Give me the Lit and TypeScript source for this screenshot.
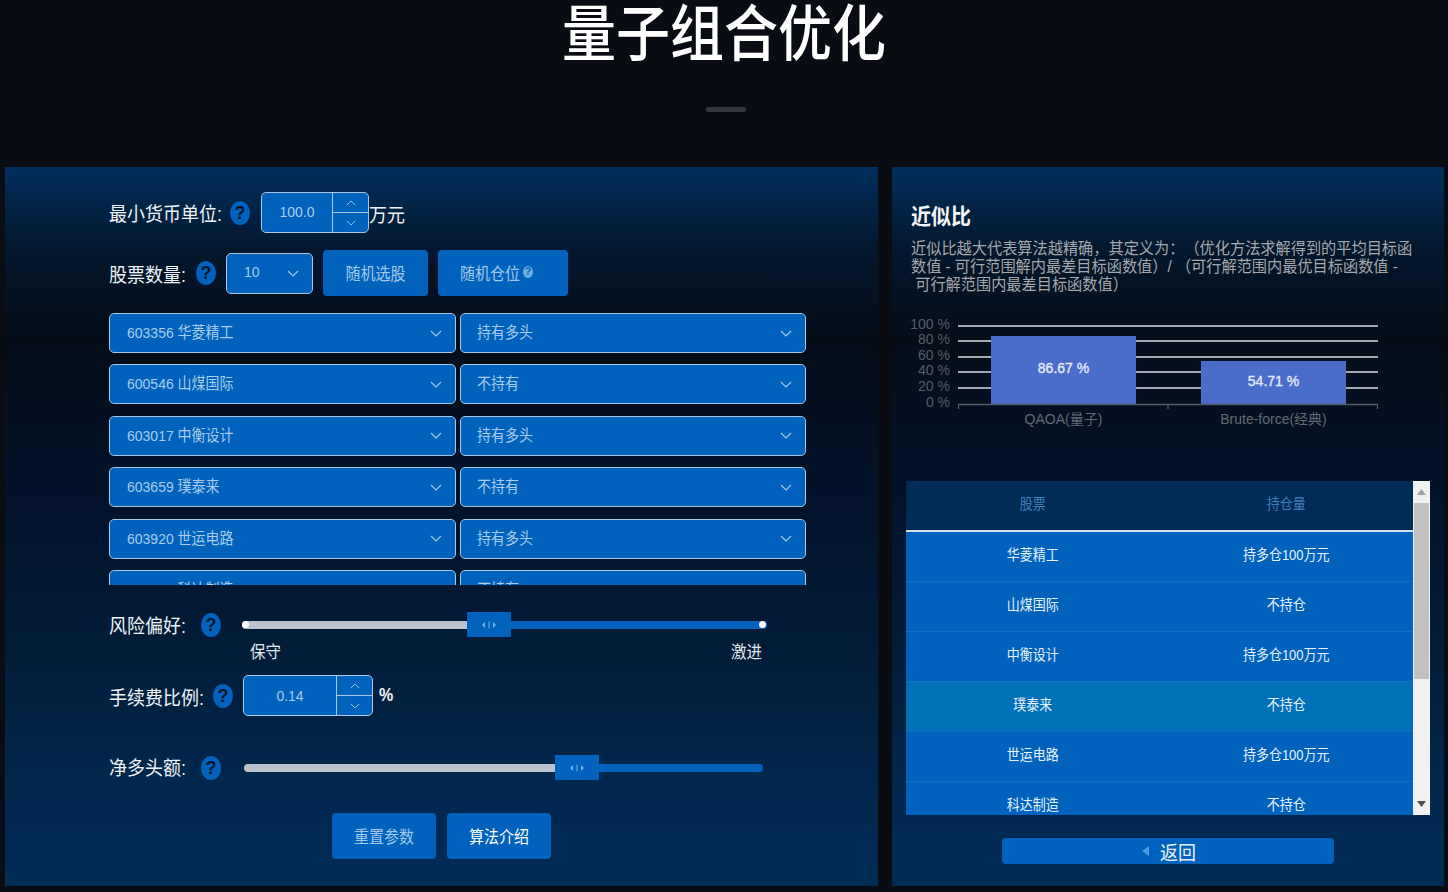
import { LitElement, html, css, svg } from 'lit';
import { customElement, state } from 'lit/decorators.js';
import { classMap } from 'lit/directives/class-map.js';

const chevronDown = html`<svg class="chev" viewBox="0 0 12 7"><polyline points="1,1 6,6 11,1"></polyline></svg>`;
const chevronUp = html`<svg class="chev small" viewBox="0 0 12 7"><polyline points="1,6 6,1 11,6"></polyline></svg>`;
const chevronDownSmall = html`<svg class="chev small" viewBox="0 0 12 7"><polyline points="1,1 6,6 11,1"></polyline></svg>`;

const handle = html`<span class="handle">
  <svg viewBox="0 0 20 8" width="20" height="8">
    <polygon points="3,4 6,1 6,7" fill="#6fb3ea"></polygon>
    <rect x="9.5" y="0.5" width="1" height="7" fill="#6fb3ea"></rect>
    <polygon points="17,4 14,1 14,7" fill="#6fb3ea"></polygon>
  </svg>
</span>`;

const help = html`<span class="help">?</span>`;

@customElement('app-root')
export class AppRoot extends LitElement {
  @state() stocks = [
    ['603356 华菱精工', '持有多头', '华菱精工', '持多仓100万元'],
    ['600546 山煤国际', '不持有', '山煤国际', '不持仓'],
    ['603017 中衡设计', '持有多头', '中衡设计', '持多仓100万元'],
    ['603659 璞泰来', '不持有', '璞泰来', '不持仓'],
    ['603920 世运电路', '持有多头', '世运电路', '持多仓100万元'],
    ['600499 科达制造', '不持有', '科达制造', '不持仓'],
  ];

  static styles = css`
    :host {
      display: block;
      height: 892px;
      overflow: hidden;
      background: #090d13;
      color: #eef3f8;
      font-family: "Liberation Sans", "Noto Sans CJK SC", sans-serif;
      text-spacing-trim: space-all;
    }

    /* the reference text is a little taller than it is wide */
    .tall {
      display: inline-block;
      transform: scaleY(1.1);
    }

    .header {
      height: 167px;
      display: flex;
      flex-direction: column;
      align-items: center;
    }

    .title {
      font-size: 54px;
      line-height: 66px;
      font-weight: 500;
      color: #fff;
      margin: 0;
      transform: translateY(1.7px) scaleY(1.13);
    }

    .divider {
      width: 40px;
      height: 5px;
      margin: 41px 0 0 3px;
      border-radius: 2px;
      background: #33373d;
    }

    .main {
      display: flex;
      gap: 14px;
      padding-left: 5px;
    }

    .panel {
      height: 719px;
      box-sizing: border-box;
      background: linear-gradient(180deg, #012f5c 0%, #03162c 12%, #050d19 24%, #03122a 45%, #021b36 65%, #01274c 85%, #012c56 100%);
    }

    .left {
      width: 873px;
      padding: 25px 0 0 104px;
    }

    .right {
      width: 552px;
      padding-top: 35px;
    }

    .row {
      display: flex;
      align-items: center;
      font-size: 18px;
    }

    .label {
      font-size: 18px;
      white-space: nowrap;
      color: #eef3f8;
    }

    .label.up {
      margin-bottom: 2px;
    }

    .label.up-more {
      margin-bottom: 4px;
    }

    .help {
      flex: none;
      width: 20px;
      height: 24px;
      margin-left: 9px;
      border-radius: 50%;
      background: #0062bd;
      color: #04162c;
      font-size: 18px;
      font-weight: 700;
      line-height: 24px;
      text-align: center;
    }

    .help.near {
      margin-left: 8px;
    }

    .help.wide {
      margin-left: 10px;
    }

    .help.far {
      margin-left: 15px;
    }

    .chev {
      flex: none;
      width: 12px;
      height: 7px;
      fill: none;
      stroke: #a9cdea;
      stroke-width: 1.1;
    }

    .chev.small {
      width: 10px;
      height: 6px;
    }

    .stepper {
      display: flex;
      box-sizing: border-box;
      height: 41px;
      border: 1.5px solid #a8c7e0;
      border-radius: 5px;
      background: #0062bd;
      color: #a9cdea;
      font-size: 14px;
    }

    .stepper .value {
      flex: 1;
      display: flex;
      align-items: center;
      justify-content: center;
      padding-bottom: 2px;
    }

    .stepper .steps {
      width: 35px;
      display: flex;
      flex-direction: column;
      border-left: 1.5px solid #a8c7e0;
    }

    .stepper .steps span {
      flex: 1;
      display: flex;
      align-items: center;
      justify-content: center;
    }

    .stepper .steps span + span {
      border-top: 1.5px solid #a8c7e0;
    }

    .unit-input {
      width: 108px;
      margin-left: 11px;
    }

    .fee-input {
      width: 130px;
      margin-left: 10px;
    }

    .percent {
      margin-left: 6px;
      font-size: 16px;
      font-weight: 700;
    }

    .select {
      display: flex;
      align-items: center;
      justify-content: space-between;
      box-sizing: border-box;
      height: 40px;
      padding: 0 13px 0 17px;
      border: 1.5px solid #a8c7e0;
      border-radius: 5px;
      background: #0062bd;
      color: #a9cdea;
      font-size: 14px;
      white-space: nowrap;
    }

    .select.side {
      padding-left: 16px;
    }

    .select span {
      margin-bottom: 4px;
    }

    .count-select {
      width: 87px;
      height: 41px;
      margin-left: 10px;
    }

    .btn {
      display: flex;
      align-items: center;
      justify-content: center;
      height: 46px;
      padding-bottom: 2px;
      box-sizing: border-box;
      border-radius: 4px;
      background: #0062bd;
      color: #a3c9ea;
      font-size: 15px;
      white-space: nowrap;
    }

    .btn.white {
      color: #fff;
    }

    .row-count {
      height: 46px;
      margin-top: 17px;
    }

    .btn-pick {
      width: 105px;
      margin-left: 10px;
    }

    .btn-wide {
      width: 130px;
      margin-left: 10px;
      padding-left: 22px;
      justify-content: flex-start;
    }

    .mini-help {
      width: 10px;
      height: 12px;
      margin-left: 3px;
      border-radius: 50%;
      background: #6cb0e0;
      color: #0062bd;
      font-size: 10px;
      font-weight: 700;
      line-height: 12px;
      text-align: center;
    }

    .stock-list {
      width: 697px;
      height: 272px;
      margin-top: 17px;
      overflow: hidden;
      display: grid;
      grid-template-columns: 347px 346px;
      grid-auto-rows: 40px;
      column-gap: 4px;
      row-gap: 11.4px;
    }

    .slider {
      display: flex;
      align-items: center;
      height: 25px;
    }

    .slider .done,
    .slider .rest {
      height: 8px;
    }

    .slider .done {
      background: #bcc2cb;
      border-radius: 4px 0 0 4px;
    }

    .slider .rest {
      background: #0062bd;
      border-radius: 0 4px 4px 0;
    }

    .slider .done.dot,
    .slider .rest.dot {
      position: relative;
    }

    .slider .done.dot::before,
    .slider .rest.dot::after {
      content: '';
      position: absolute;
      top: 0.5px;
      width: 7px;
      height: 7px;
      border-radius: 50%;
      background: #fff;
    }

    .slider .done.dot::before {
      left: 0;
    }

    .slider .rest.dot::after {
      right: 1px;
    }

    .handle {
      flex: none;
      width: 44px;
      height: 25px;
      background: #0062bd;
      display: flex;
      align-items: center;
      justify-content: center;
    }

    .row-risk {
      height: 25px;
      margin-top: 27px;
    }

    .risk-slider {
      margin-left: 21px;
    }

    .ends {
      display: flex;
      justify-content: space-between;
      box-sizing: border-box;
      width: 653px;
      height: 20px;
      margin-top: 5px;
      padding-left: 141px;
      font-size: 15.5px;
      line-height: 20px;
      color: #e2e8ef;
    }

    .row-fee {
      height: 41px;
      margin-top: 13px;
    }

    .row-net {
      height: 25px;
      margin-top: 39px;
    }

    .net-slider {
      margin-left: 22.5px;
    }

    .actions {
      display: flex;
      gap: 11px;
      margin-top: 33px;
      padding-left: 223px;
    }

    .actions .btn {
      width: 104px;
    }

    .chart-title {
      margin: 0 0 0 19px;
      font-size: 20px;
      line-height: 28px;
      font-weight: 700;
      color: #f4f6f8;
      transform: scaleY(1.1);
    }

    .desc {
      margin: 12px 0 0 19px;
      font-size: 15.2px;
      line-height: 16.7px;
      color: #a4a7ab;
      white-space: nowrap;
      transform: scaleY(1.08);
    }

    .chart {
      display: block;
      margin-top: 24px;
      width: 552px;
      height: 120px;
    }

    .chart text {
      font-family: "Liberation Sans", "Noto Sans CJK SC", sans-serif;
      font-size: 14px;
    }

    .table-wrap {
      display: flex;
      width: 524px;
      height: 334px;
      margin: 45px 0 0 14px;
    }

    .table {
      flex: 1;
      overflow: hidden;
      font-size: 13px;
    }

    .tr {
      display: grid;
      grid-template-columns: 1fr 1fr;
      align-items: center;
      justify-items: center;
      box-sizing: border-box;
      height: 50px;
      padding-bottom: 6px;
      background: #0062bd;
      border-bottom: 1px solid #0a72c6;
      color: #e6f3ff;
    }

    .tr.alt {
      background: #0070b8;
    }

    .tr.head {
      height: 51px;
      background: #012c56;
      border-bottom: 2px solid #d3dfeb;
      color: #3f80b8;
    }

    .scrollbar {
      flex: none;
      width: 17px;
      display: flex;
      flex-direction: column;
      align-items: center;
      background: #f1f1f1;
    }

    .scrollbar .arrow {
      height: 22px;
      display: flex;
      align-items: center;
      justify-content: center;
      flex: none;
    }

    .scrollbar .thumb {
      width: 15px;
      height: 176px;
      background: #c1c1c1;
    }

    .scrollbar .track {
      flex: 1;
    }

    .back {
      display: flex;
      align-items: center;
      justify-content: center;
      gap: 11px;
      width: 332px;
      height: 26px;
      margin: 23px 0 0 110px;
      padding-left: 2px;
      box-sizing: border-box;
      border-radius: 4px;
      background: #0062bd;
      color: #eaf0f6;
      font-size: 18px;
    }
  `;

  renderChart() {
    const ticks = [
      ['100 %', 326],
      ['80 %', 341],
      ['60 %', 357],
      ['40 %', 372],
      ['20 %', 388],
      ['0 %', 404],
    ] as const;
    const bars = [
      { x: 991, top: 336, value: '86.67 %', name: 'QAOA(量子)' },
      { x: 1201, top: 361, value: '54.71 %', name: 'Brute-force(经典)' },
    ];
    return html`<svg class="chart" viewBox="892 316 552 120">
      ${ticks.map(
        ([name, y]) => svg`
          <text x="950" y=${y + 3} text-anchor="end" fill="#565d67">${name}</text>
          ${y < 404 ? svg`<line x1="958" x2="1378" y1=${y} y2=${y} stroke="#d9dde2" stroke-width="1.3"></line>` : ''}
        `,
      )}
      ${bars.map(
        (b) => svg`
          <rect x=${b.x} y=${b.top} width="145" height=${404 - b.top} fill="#4a6dcb"></rect>
          <text x=${b.x + 72.5} y=${(b.top + 404) / 2 + 3} text-anchor="middle" fill="#e4eaf6" stroke="#e4eaf6" stroke-width="0.35">${b.value}</text>
          <text x=${b.x + 72.5} y="424" text-anchor="middle" fill="#626a74">${b.name}</text>
        `,
      )}
      <path d="M958.5 409V404.5H1377.5V409M1168 404.5V409" fill="none" stroke="#555b66" stroke-width="1.3"></path>
    </svg>`;
  }

  render() {
    return html`
      <div class="header">
        <h1 class="title">量子组合优化</h1>
        <div class="divider"></div>
      </div>
      <div class="main">
        <section class="panel left">
          <div class="row">
            <span class="label tall up">最小货币单位:</span><span class="help near">?</span>
            <div class="stepper unit-input">
              <span class="value"><span class="tall">100.0</span></span>
              <span class="steps"><span>${chevronUp}</span><span>${chevronDownSmall}</span></span>
            </div>
            <span class="tall">万元</span>
          </div>

          <div class="row row-count">
            <span class="label tall">股票数量:</span><span class="help wide">?</span>
            <div class="select count-select"><span class="tall">10</span>${chevronDown}</div>
            <div class="btn btn-pick"><span class="tall">随机选股</span></div>
            <div class="btn btn-wide"><span class="tall">随机仓位</span><span class="mini-help">?</span></div>
          </div>

          <div class="stock-list">
            ${this.stocks.map(
              (s) => html`
                <div class="select"><span class="tall">${s[0]}</span>${chevronDown}</div>
                <div class="select side"><span class="tall">${s[1]}</span>${chevronDown}</div>
              `,
            )}
          </div>

          <div class="row row-risk">
            <span class="label tall up">风险偏好:</span><span class="help far">?</span>
            <div class="slider risk-slider">
              <span class="done dot" style="width: 225px"></span>${handle}<span class="rest dot" style="width: 256px"></span>
            </div>
          </div>
          <div class="ends"><span class="tall">保守</span><span class="tall">激进</span></div>

          <div class="row row-fee">
            <span class="label tall">手续费比例:</span>${help}
            <div class="stepper fee-input">
              <span class="value"><span class="tall">0.14</span></span>
              <span class="steps"><span>${chevronUp}</span><span>${chevronDownSmall}</span></span>
            </div>
            <span class="percent tall">%</span>
          </div>

          <div class="row row-net">
            <span class="label tall up-more">净多头额:</span><span class="help far">?</span>
            <div class="slider net-slider">
              <span class="done" style="width: 311.5px"></span>${handle}<span class="rest" style="width: 163.5px"></span>
            </div>
          </div>

          <div class="actions">
            <div class="btn"><span class="tall">重置参数</span></div>
            <div class="btn white"><span class="tall">算法介绍</span></div>
          </div>
        </section>

        <section class="panel right">
          <h2 class="chart-title">近似比</h2>
          <p class="desc">
            近似比越大代表算法越精确，其定义为：（优化方法求解得到的平均目标函<br />数值 - 可行范围解内最差目标函数值）/ （可行解范围内最优目标函数值 -<br />&nbsp;可行解范围内最差目标函数值）
          </p>
          ${this.renderChart()}

          <div class="table-wrap">
            <div class="table">
              <div class="tr head"><span class="tall">股票</span><span class="tall">持仓量</span></div>
              ${this.stocks.map(
                (s, i) => html`<div class=${classMap({ tr: true, alt: i === 3 })}><span class="tall">${s[2]}</span><span class="tall">${s[3]}</span></div>`,
              )}
            </div>
            <div class="scrollbar">
              <span class="arrow"><svg width="9" height="6"><polygon points="4.5,0 9,6 0,6" fill="#a3a3a3"></polygon></svg></span>
              <span class="thumb"></span>
              <span class="track"></span>
              <span class="arrow"><svg width="9" height="6"><polygon points="0,0 9,0 4.5,6" fill="#505050"></polygon></svg></span>
            </div>
          </div>

          <div class="back">
            <svg width="7" height="10"><polygon points="0,5 7,0 7,10" fill="#4a9fe0"></polygon></svg>
            <span class="tall">返回</span>
          </div>
        </section>
      </div>
    `;
  }
}
